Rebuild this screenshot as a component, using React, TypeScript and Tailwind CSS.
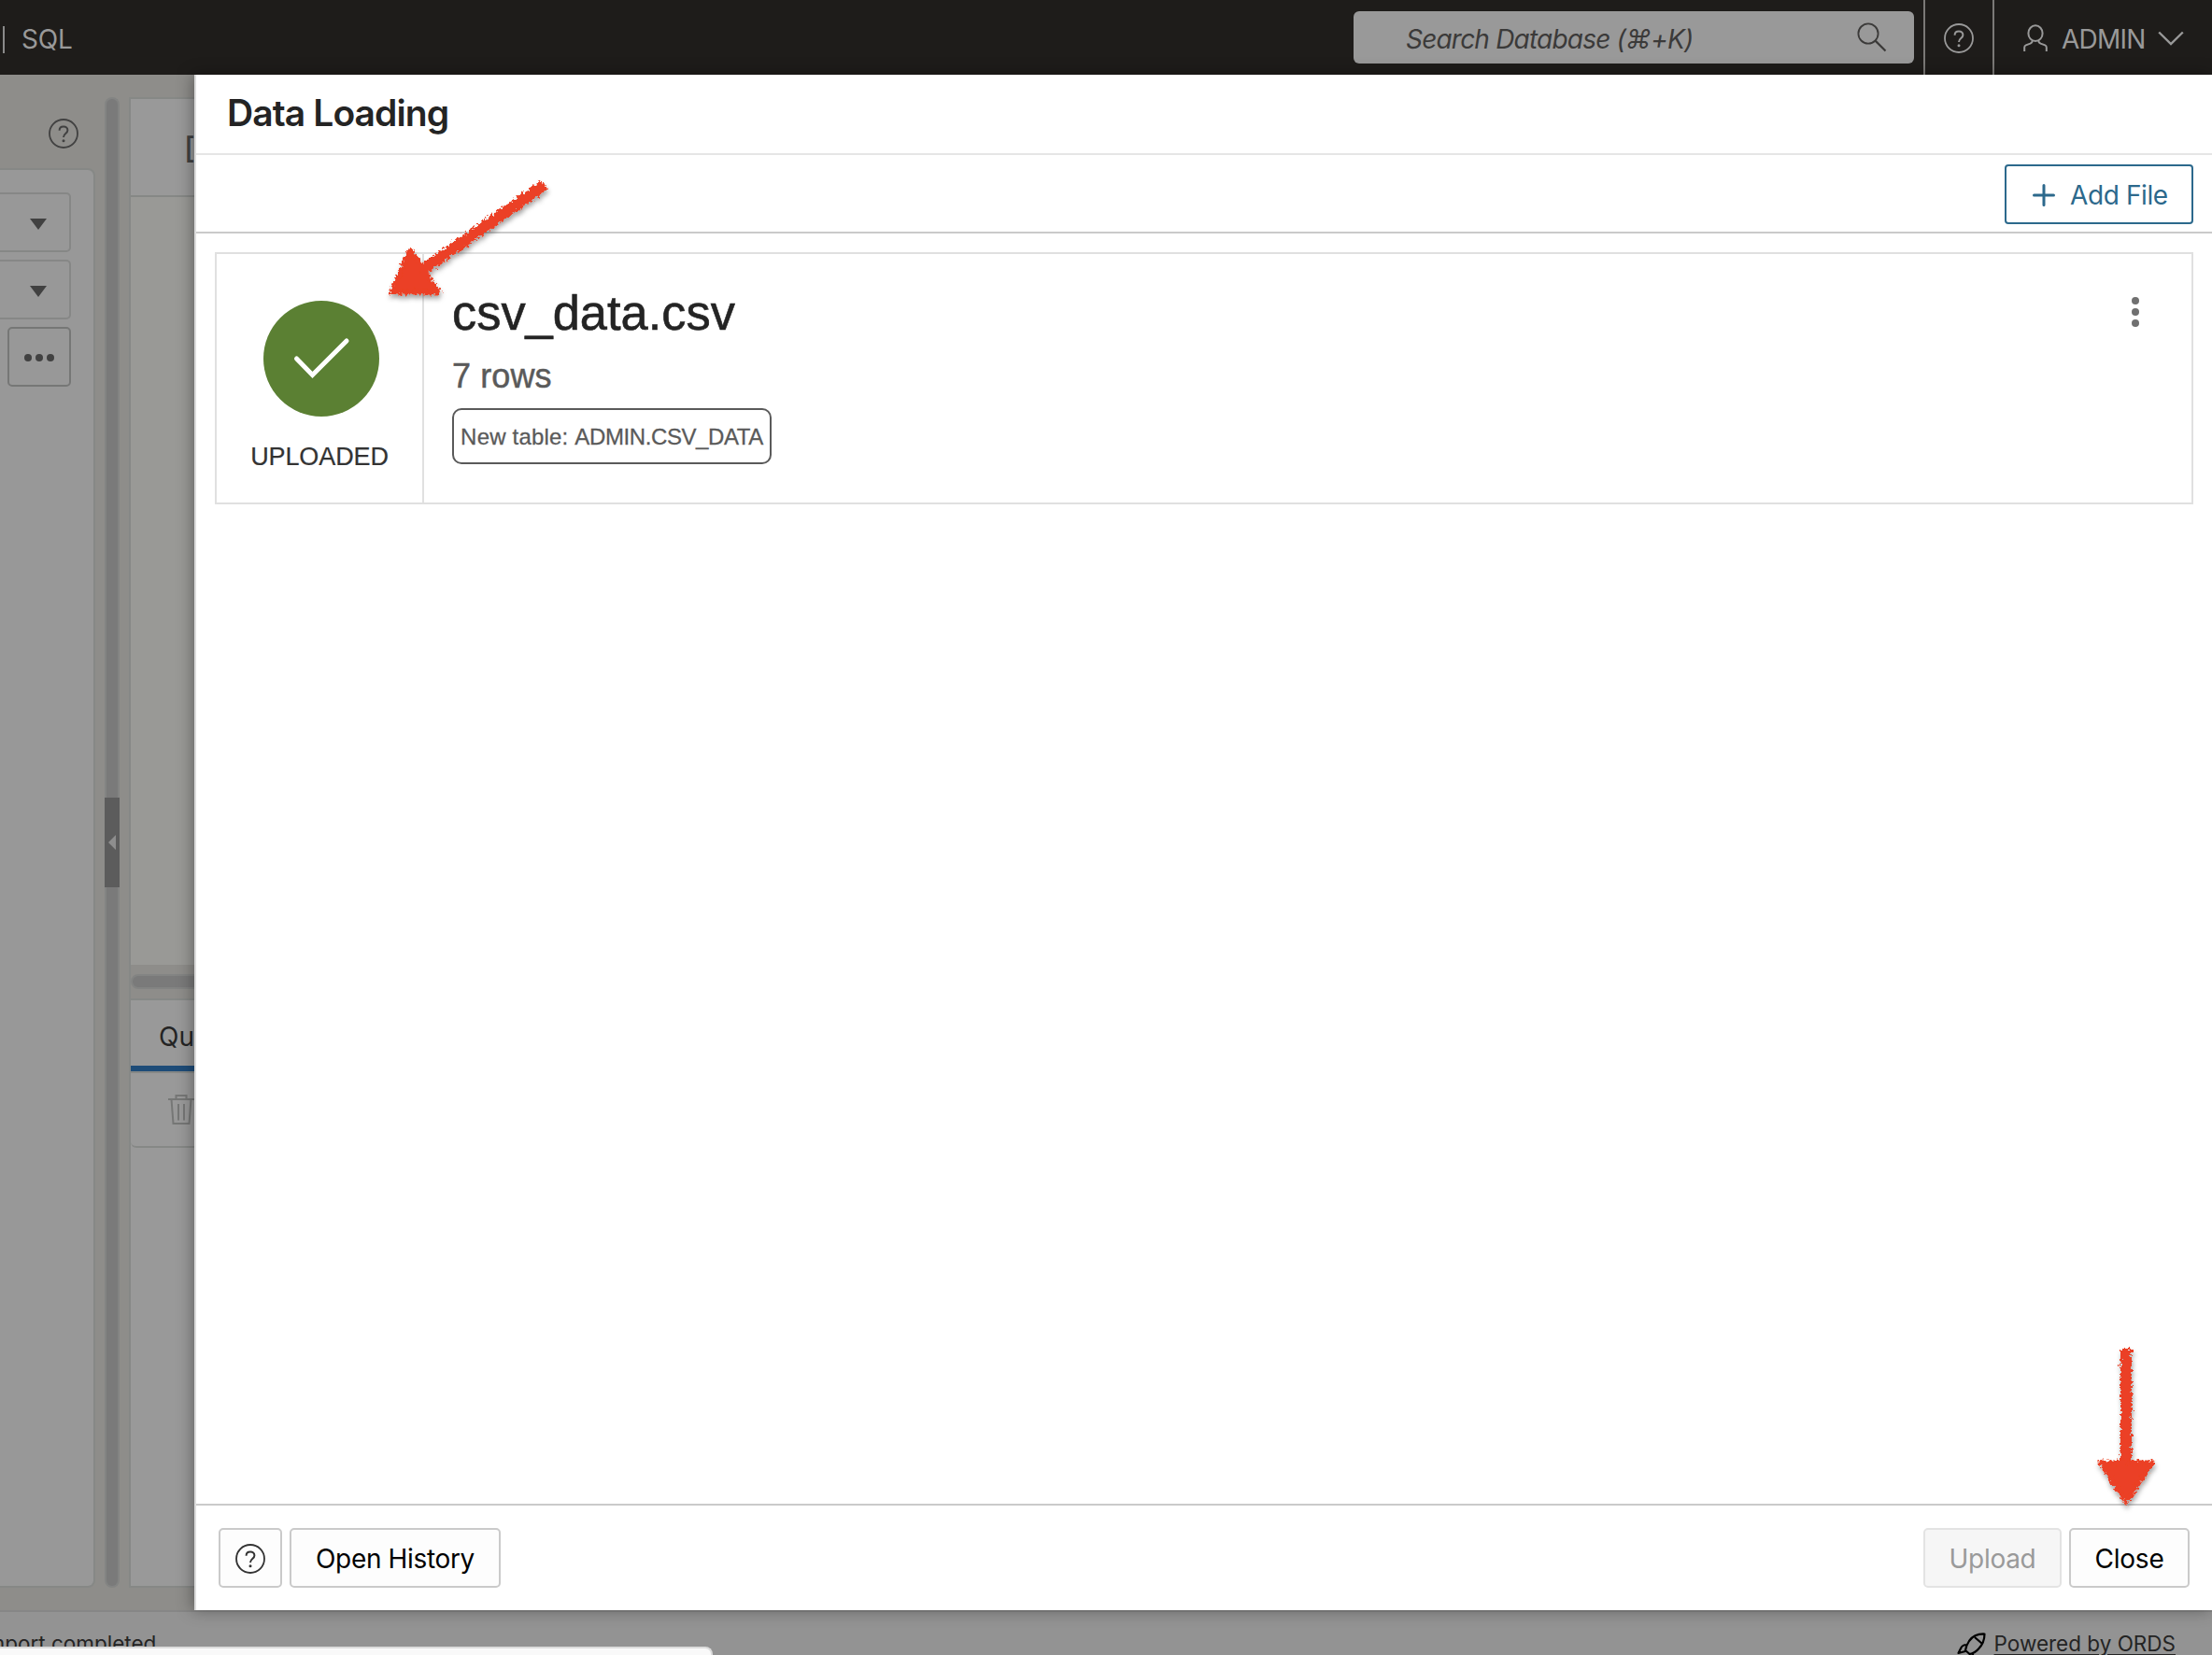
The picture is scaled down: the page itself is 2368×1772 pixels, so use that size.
import { useId, type ReactNode } from 'react';

function HelpIcon({ className }: { className: string }) {
  return (
    <svg viewBox="0 0 32 32" fill="none" stroke="currentColor" strokeWidth={1.8} className={className}>
      <circle cx="16" cy="16" r="15" />
      <path d="M11.6 12.8c0-2.7 1.9-4.3 4.4-4.3s4.4 1.6 4.4 4c0 3.6-4.4 3.6-4.4 7.4" strokeWidth={2} />
      <circle cx="16" cy="23.8" r="1.5" fill="currentColor" stroke="none" />
    </svg>
  );
}

function Header() {
  return (
    <header className="flex h-20 items-center bg-[#1e1c1a] text-[28px] leading-none text-[#999999]">
      <div className="mt-[5px] ml-[3px] h-[29px] w-[2px] bg-[#8a8a8a]" />
      <span className="mt-[3px] ml-[18px] tracking-[-0.2px]">SQL</span>
      <div className="ml-auto flex h-14 w-[600px] items-center rounded-md bg-[#999999] pr-[29px] pl-[56px] text-[#3b3a39]">
        <span className="mt-[3px] tracking-[-0.8px] whitespace-nowrap italic">Search Database (⌘+K)</span>
        <svg viewBox="0 0 32 32" fill="none" stroke="currentColor" strokeWidth={1.8} className="ml-auto size-8">
          <circle cx="12" cy="12" r="10.6" />
          <path d="M19.6 19.6 30.5 30.5" strokeWidth={2.2} />
        </svg>
      </div>
      <div className="ml-[10px] flex h-20 w-[76px] items-center justify-center border-x-2 border-[#7b7977] pt-[2px]">
        <HelpIcon className="size-8" />
      </div>
      <div className="flex w-[233px] items-center pt-[2px]">
        <svg viewBox="0 0 26 30" fill="none" stroke="currentColor" strokeWidth={2} className="ml-[31px] h-[30px] w-[26px]">
          <ellipse cx="13" cy="9.7" rx="7.6" ry="8.4" />
          <path d="M1.2 29v-4.2c0-1.1.6-2 1.6-2.4l4.6-1.8c1.6-.7 2.4-1.7 2.4-3.3M24.8 29v-4.2c0-1.1-.6-2-1.6-2.4l-4.6-1.800c-1.600-.7-2.400-1.700-2.400-3.300" />
        </svg>
        <span className="mt-[1px] ml-[15px] w-[90px] tracking-[-0.8px]">ADMIN</span>
        <svg viewBox="0 0 28 16" fill="none" stroke="currentColor" strokeWidth={2.4} className="ml-[13px] h-4 w-7">
          <path d="M1.200 1.500 14 14 26.800 1.500" />
        </svg>
      </div>
    </header>
  );
}

function SelectBox() {
  return (
    <div className="flex h-16 w-[76px] items-center rounded-r-[5px] border-2 border-l-0 border-[#868786] pt-[4px] pl-8">
      <svg viewBox="0 0 18 12" className="h-3 w-[18px] fill-[#414141]">
        <path d="M0 0h18l-9 12z" />
      </svg>
    </div>
  );
}

function Navigator() {
  return (
    <div className="flex w-[102px] flex-col pb-[24px]">
      <div className="flex h-[100px] items-center justify-end pt-[26px] pr-[18px] text-[#414141]">
        <HelpIcon className="size-8" />
      </div>
      <div className="flex flex-1 flex-col gap-2 rounded-r-lg border-2 border-l-0 border-[#868886] bg-[#989898] pt-6">
        <SelectBox />
        <SelectBox />
        <div className="ml-2 flex h-16 w-[68px] items-center justify-center gap-1 rounded-[5px] border-2 border-[#767776] pt-[2px]">
          <i className="size-2 rounded-full bg-[#414141]" />
          <i className="size-2 rounded-full bg-[#414141]" />
          <i className="size-2 rounded-full bg-[#414141]" />
        </div>
      </div>
    </div>
  );
}

function Worksheet() {
  return (
    <div className="ml-[10px] flex flex-1 flex-col pt-6 pb-[24px]">
      <div className="h-[107px] border-2 border-[#868886] bg-[#999999] pt-[37px] pl-[57px] text-[32px] leading-8 font-medium text-[#414141]">
        [
      </div>
      <div className="h-[822px] border-l-2 border-[#868886] bg-[#999996]" />
      <div className="flex h-9 flex-col justify-center border-l-2 border-[#868886]">
        <div className="h-4 rounded-l-full border-2 border-[#838483] bg-[#7a7a7a]" />
      </div>
      <div className="flex flex-1 flex-col border-2 border-[#868886] bg-[#999999]">
        <div className="h-[70px] pt-[24px] pl-[30px] text-[28px] leading-[30px] text-[#242424]">Qu</div>
        <div className="h-[6px] bg-[#1e4c78]" />
        <div className="h-[82px] rounded-bl-md border-y-2 border-[#868886] pt-[23px] pl-[40px] text-[#767776]">
          <svg viewBox="0 0 28 32" fill="none" stroke="currentColor" strokeWidth={2} className="h-8 w-7">
            <path d="M0 5h28M8.500 5V1h11v4M3.500 5l2 26h17l2-26M11 10v17.500M17 10v17.500" />
          </svg>
        </div>
      </div>
    </div>
  );
}

function FooterButton({ children, className }: { children: ReactNode; className: string }) {
  return (
    <button className={`flex h-16 items-center justify-center rounded-[5px] border-2 pt-[2px] whitespace-nowrap ${className}`}>
      {children}
    </button>
  );
}

function Dialog() {
  return (
    <section className="absolute inset-y-0 right-0 flex w-[2160px] flex-col border-l-2 border-[#dcdcdc] bg-white shadow-[-2px_0_16px_rgba(0,0,0,0.35)]">
      <div className="flex h-[86px] items-center border-b-2 border-[#e6e6e6] pb-[4px] pl-[33px]">
        <h1 className="text-[39px] leading-none font-[560] tracking-[-0.9px] text-[#242424]">Data Loading</h1>
      </div>
      <div className="flex h-[84px] items-center justify-end border-b-2 border-[#cacaca] pt-[2px] pr-5">
        <button className="flex h-16 w-[202px] items-center rounded-[4px] border-2 border-[#2c698c] pt-[1px] pl-[28px] text-[28px] leading-none text-[#2c698c]">
          <svg viewBox="0 0 24 24" fill="none" stroke="currentColor" strokeWidth={3} strokeLinecap="round" className="size-6">
            <path d="M12 1.500v21M1.500 12h21" />
          </svg>
          <span className="mt-[1px] ml-4 tracking-[-0.4px] whitespace-nowrap">Add File</span>
        </button>
      </div>
      <div className="flex-1 px-5 pt-5">
        <article className="flex h-[270px] border-2 border-[#e0e0e0] font-['Liberation_Sans',Arial,sans-serif]">
          <div className="flex w-[222px] flex-col items-center border-r-2 border-[#e0e0e0] pt-[50px]">
            <svg viewBox="0 0 124 124" className="ml-[4px] size-[124px]">
              <circle cx="62" cy="62" r="62" className="fill-[#5b8033]" />
              <path d="M35.500 62 52.500 79.500 89 43" fill="none" stroke="#fff" strokeWidth={5} strokeLinecap="round" />
            </svg>
            <span className="mt-[29px] text-[27px] leading-7 tracking-[-0.1px] text-[#333333] [-webkit-text-stroke:0.2px]">UPLOADED</span>
          </div>
          <div className="flex flex-col items-start pt-[32px] pl-[30px]">
            <h2 className="text-[52.4px] leading-[62px] text-[#242424] [-webkit-text-stroke:0.6px]">csv_data.csv</h2>
            <p className="mt-[17px] text-[36px] leading-[40px] tracking-[0.1px] text-[#5a5a5a] [-webkit-text-stroke:0.5px]">7 rows</p>
            <span className="mt-[14px] flex h-[60px] w-[342px] items-center justify-center rounded-[10px] border-2 border-[#5a5a5a] pt-[1px] text-[24px] leading-none whitespace-pre text-[#5a5a5a] [-webkit-text-stroke:0.3px]">
              <span className="tracking-[0.2px]">New table: </span>
              <span className="tracking-[-0.4px]">ADMIN.CSV_DATA</span>
            </span>
          </div>
          <div className="mt-[46px] mr-[56px] ml-auto flex flex-col gap-1">
            <i className="size-2 rounded-full bg-[#707070]" />
            <i className="size-2 rounded-full bg-[#707070]" />
            <i className="size-2 rounded-full bg-[#707070]" />
          </div>
        </article>
      </div>
      <footer className="flex h-[114px] items-center gap-2 border-t-2 border-[#cacaca] pr-[24px] pl-6 text-[28px] leading-none text-black">
        <FooterButton className="w-[68px] border-[#cacaca] bg-[#fdfdfd] text-[#333333]">
          <HelpIcon className="size-8" />
        </FooterButton>
        <FooterButton className="mr-auto w-[226px] border-[#cacaca] bg-[#fdfdfd] tracking-[-0.35px]">Open History</FooterButton>
        <FooterButton className="w-[148px] border-[#e3e3e3] bg-[#f6f6f6] tracking-[-0.3px] text-[#9a9a9a]">Upload</FooterButton>
        <FooterButton className="w-[129px] border-[#cacaca] bg-[#fdfdfd] tracking-[-0.2px]">Close</FooterButton>
      </footer>
    </section>
  );
}

function Arrow({ className, shaft, head, box }: { className: string; shaft: string; head: string; box: string }) {
  const id = useId();
  return (
    <svg viewBox={box} className={`pointer-events-none absolute ${className}`}>
      <defs>
        <filter id={id} x="-30%" y="-20%" width="160%" height="140%">
          <feTurbulence type="fractalNoise" baseFrequency="0.33" numOctaves="2" seed="4" result="noise" />
          <feDisplacementMap in="SourceGraphic" in2="noise" scale="9" xChannelSelector="R" yChannelSelector="G" result="rough" />
          <feDropShadow in="rough" dx="1" dy="4" stdDeviation="2.5" floodColor="#000" floodOpacity="0.35" />
        </filter>
      </defs>
      <g filter={`url(#${id})`} stroke="#eb4025" fill="#eb4025" strokeLinejoin="round">
        <path d={shaft} strokeWidth={12} />
        <path d={head} strokeWidth={5} />
      </g>
    </svg>
  );
}

export default function App() {
  return (
    <div className="relative flex h-[1772px] w-[2368px] flex-col overflow-hidden bg-[#8e8d8a] font-[Inter,'DejaVu_Sans',sans-serif]">
      <Header />
      <main className="relative flex h-[1644px]">
        <Navigator />
        <div className="ml-[10px] flex w-4 flex-col pt-6 pb-[24px]">
          <div className="h-[750px] rounded-t-full border-2 border-b-0 border-[#838483] bg-[#7a7a7a]" />
          <div className="flex h-24 items-center justify-center bg-[#5c5c5c]">
            <svg viewBox="0 0 8 16" className="h-4 w-2 fill-[#8e8e8e]"><path d="M8 0v16L0 8z" /></svg>
          </div>
          <div className="flex-1 rounded-b-full border-2 border-t-0 border-[#838483] bg-[#7a7a7a]" />
        </div>
        <Worksheet />
        <Dialog />
      </main>
      <div className="flex h-12 justify-between border-t-2 border-[#868686] bg-[#939393] text-[22.5px] leading-[30px] text-[#242424]">
        <span className="ml-[-20px] pt-[19px] whitespace-nowrap">import completed</span>
        <div className="flex items-start gap-[8px] pt-[19px] pr-[39px]">
          <svg viewBox="0 0 32 32" fill="none" stroke="#000" strokeWidth={2.2} strokeLinejoin="round" className="mt-[3px] size-8">
            <path d="M29.500 1.500c-7-.3-13 2.500-16.500 7.500-2 3-3.500 6.500-4 10l4.500 4c4-.8 7-2.500 9.500-5.500 4.500-4.500 6.500-9.500 6.500-16zM19 5l7.500 6.500M10.500 13c-3.500 0-5.500 1.500-6.500 4l-2.500 5 7.500-2M17 21.500v4l-3 5" />
          </svg>
          <a className="whitespace-nowrap underline decoration-2 underline-offset-[3px]">Powered by ORDS</a>
        </div>
      </div>
      <div className="absolute bottom-0 left-0 h-[9px] w-[763px] rounded-tr-lg border-t-2 border-r-2 border-[#dcdcdc] bg-[#f9f9f9]" />
      <Arrow className="top-[180px] left-[400px] h-[160px] w-[200px]" box="400 180 200 160" shaft="M583 198 451 290" head="M439 268 419 313 469 313z" />
      <Arrow className="top-[1430px] left-[2230px] h-[200px] w-[92px]" box="2230 1430 92 200" shaft="M2276 1444V1570" head="M2249 1566H2304L2276 1608z" />
    </div>
  );
}
